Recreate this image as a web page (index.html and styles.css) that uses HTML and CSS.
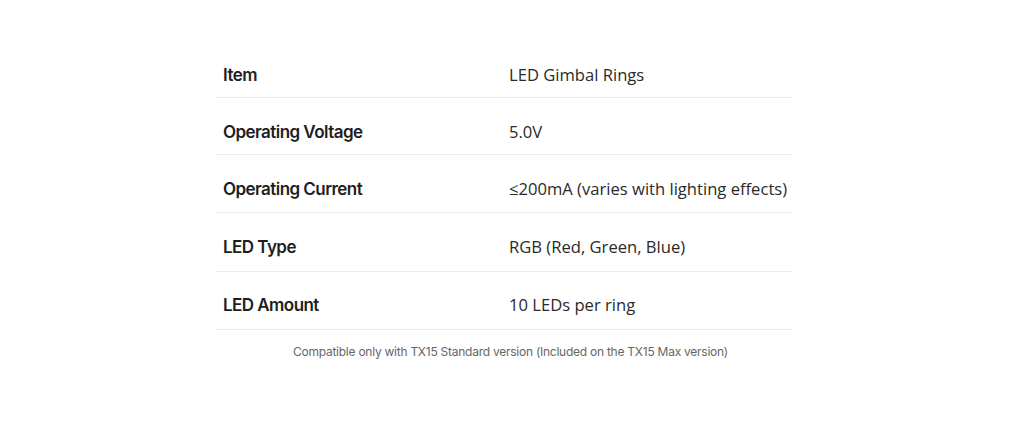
FILE: index.html
```html
<!DOCTYPE html>
<html>
<head>
<meta charset="utf-8">
<link rel="stylesheet" href="styles.css">
</head>
<body>
<div class="spec">
  <div class="row"><div class="label">Item</div><div class="value">LED Gimbal Rings</div></div>
  <div class="row"><div class="label">Operating Voltage</div><div class="value">5.0V</div></div>
  <div class="row"><div class="label">Operating Current</div><div class="value">≤200mA (varies with lighting effects)</div></div>
  <div class="row"><div class="label">LED Type</div><div class="value">RGB (Red, Green, Blue)</div></div>
  <div class="row"><div class="label">LED Amount</div><div class="value">10 LEDs per ring</div></div>
  <p class="note">Compatible only with TX15 Standard version (Included on the TX15 Max version)</p>
</div>
</body>
</html>
```
FILE: styles.css
```css
html, body { margin: 0; padding: 0; background: #fff; }
body { width: 1024px; height: 440px; overflow: hidden; }
.spec { width: 576px; margin: 40px 0 0 216px; }
.row {
  display: grid;
  grid-template-columns: 293px 1fr;
  border-bottom: 1px solid #ececec;
  padding: 22px 0 11px;
  height: 24px;
}
.row:nth-child(1) { padding: 23px 0 10px; }
.row:nth-child(2) { padding: 22px 0 10px; }
.row:nth-child(4) { padding: 22px 0 12px; }
.row:nth-child(5) { padding: 21px 0 12px; }
.label {
  padding-left: 7px;
  font-family: Inter, "Liberation Sans", sans-serif;
  font-weight: 600;
  font-size: 17px;
  line-height: 24px;
  letter-spacing: -0.55px;
  color: #1e1e1e;
}
.value {
  font-family: "Open Sans", "Liberation Sans", sans-serif;
  font-size: 16.6px;
  line-height: 24px;
  color: #2a2a2a;
}
.note {
  margin: 13px 0 0;
  padding-left: 13px;
  text-align: center;
  font-family: Inter, "Liberation Sans", sans-serif;
  font-size: 12px;
  line-height: 18px;
  letter-spacing: -0.25px;
  color: #666;
}
```
